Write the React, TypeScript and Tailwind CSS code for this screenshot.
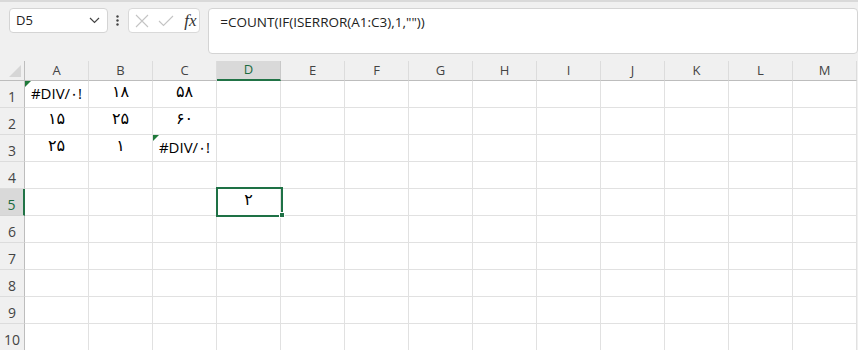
import React from "react";

const COLS = ["A", "B", "C", "D", "E", "F", "G", "H", "I", "J", "K", "L", "M"];
const data: Record<string, string> = {
  A1: "#DIV/۰!",
  B1: "۱۸",
  C1: "۵۸",
  A2: "۱۵",
  B2: "۲۵",
  C2: "۶۰",
  A3: "۲۵",
  B3: "۱",
  C3: "#DIV/۰!",
  D5: "۲",
};
const errs = new Set(["A1", "C3"]);

export default function App() {
  const rows = Array.from({ length: 10 }, (_, i) => i + 1);
  return (
    <div
      className="w-[858px] h-[350px] overflow-hidden bg-[#f0f0f0] flex flex-col"
      style={{ fontFamily: '"Segoe UI","Noto Sans","DejaVu Sans",sans-serif' }}
    >
      <div className="h-[2px] bg-[#d9d9d9] shrink-0" />
      {/* formula bar area */}
      <div className="h-[59px] shrink-0 flex items-start pt-[6px] pl-[9px]">
        <div className="w-[100px] h-[25px] bg-white border border-[#d4d4d4] rounded-[4px] flex items-center justify-between pl-[6px] pr-[6px]">
          <span className="text-[13px] text-[#222] font-['Open_Sans',sans-serif]">D5</span>
          <svg width="11" height="7" viewBox="0 0 11 7" className="mr-[1px]">
            <path d="M1 1 L5.5 5.5 L10 1" fill="none" stroke="#444" strokeWidth="1.2" />
          </svg>
        </div>
        <div className="w-[21px] h-[25px] flex items-center justify-center">
          <svg width="3" height="11" viewBox="0 0 3 11">
            <circle cx="1.5" cy="1.5" r="1.2" fill="#444" />
            <circle cx="1.5" cy="5.5" r="1.2" fill="#444" />
            <circle cx="1.5" cy="9.5" r="1.2" fill="#444" />
          </svg>
        </div>
        <div className="w-[73px] h-[25px] bg-white border border-[#d9d9d9] rounded-[4px] flex items-center pl-[6px] gap-[9px]">
          <svg width="14" height="14" viewBox="0 0 14 14">
            <path d="M1 1 L13 13 M13 1 L1 13" stroke="#c4c4c4" strokeWidth="1.1" fill="none" />
          </svg>
          <svg width="16" height="12" viewBox="0 0 16 12">
            <path d="M1 6 L5.5 10.5 L15 1" stroke="#c4c4c4" strokeWidth="1.1" fill="none" />
          </svg>
          <span className="text-[17px] italic text-[#333] leading-none ml-[1px] font-['Liberation_Serif',serif]">fx</span>
        </div>
        <div className="ml-[8px] w-[660px] h-[46px] bg-white border border-[#d4d4d4] rounded-[4px] pl-[11px] pt-[2px] leading-[20px]">
          <span className="text-[13.5px] text-[#222] font-['Open_Sans',sans-serif]">
            =COUNT(IF(ISERROR(A1:C3),1,""))
          </span>
        </div>
      </div>
      {/* grid */}
      <div className="relative flex-1">
        <div className="grid grid-cols-[25px_repeat(13,64px)] grid-rows-[20px_repeat(10,27px)]">
          <div className="border-r border-b border-[#bdbdbd] bg-[#f0f0f0] flex items-end justify-end pr-[3px] pb-[3px]">
            <svg width="12" height="12" viewBox="0 0 12 12">
              <path d="M12 0 L12 12 L0 12 Z" fill="#d6d6d6" />
            </svg>
          </div>
          {COLS.map((c) =>
            c === "D" ? (
              <div
                key={c}
                className="bg-[#d9d9d9] border-r border-[#c8c8c8] border-b-2 border-b-[#217346] flex items-center justify-center text-[13px] text-[#1b6b3f] font-['Open_Sans',sans-serif]"
              >
                {c}
              </div>
            ) : (
              <div
                key={c}
                className="bg-[#f0f0f0] border-r border-[#dcdcdc] border-b border-b-[#bdbdbd] flex items-center justify-center text-[13px] text-[#444] font-['Open_Sans',sans-serif]"
              >
                {c}
              </div>
            )
          )}
          {rows.map((r) => (
            <React.Fragment key={r}>
              {r === 5 ? (
                <div className="bg-[#d9d9d9] border-r-2 border-r-[#217346] border-b border-[#d4d4d4] flex items-end justify-center pb-0 leading-[20px] text-[14px] text-[#1b6b3f] font-['Open_Sans',sans-serif]">
                  {r}
                </div>
              ) : (
                <div className="bg-[#f0f0f0] border-r border-r-[#bdbdbd] border-b border-[#dcdcdc] flex items-end justify-center pb-0 leading-[20px] text-[14px] text-[#444] font-['Open_Sans',sans-serif]">
                  {r}
                </div>
              )}
              {COLS.map((c) => {
                const key = c + r;
                const v = data[key];
                return (
                  <div
                    key={key}
                    className="relative bg-white border-r border-b border-[#e1e1e1] flex items-end justify-center pb-[3px] text-[15px] text-black font-['DejaVu_Sans',sans-serif]"
                  >
                    {errs.has(key) && (
                      <div className="absolute left-0 top-0 w-0 h-0 border-t-[6px] border-t-[#1f7a3a] border-r-[6px] border-r-transparent" />
                    )}
                    {v && (
                      <span
                        className={
                          v.startsWith("#")
                            ? "font-['Open_Sans',sans-serif] text-[15px]"
                            : "text-[16px]"
                        }
                      >
                        {v}
                      </span>
                    )}
                  </div>
                );
              })}
            </React.Fragment>
          ))}
        </div>
        {/* selection box for D5 */}
        <div className="absolute left-[216px] top-[126px] w-[67px] h-[30px] border-2 border-[#1e7145] pointer-events-none" />
        <div className="absolute left-[279px] top-[151px] w-[6px] h-[6px] bg-[#1e7145] border border-white pointer-events-none" />
      </div>
    </div>
  );
}
